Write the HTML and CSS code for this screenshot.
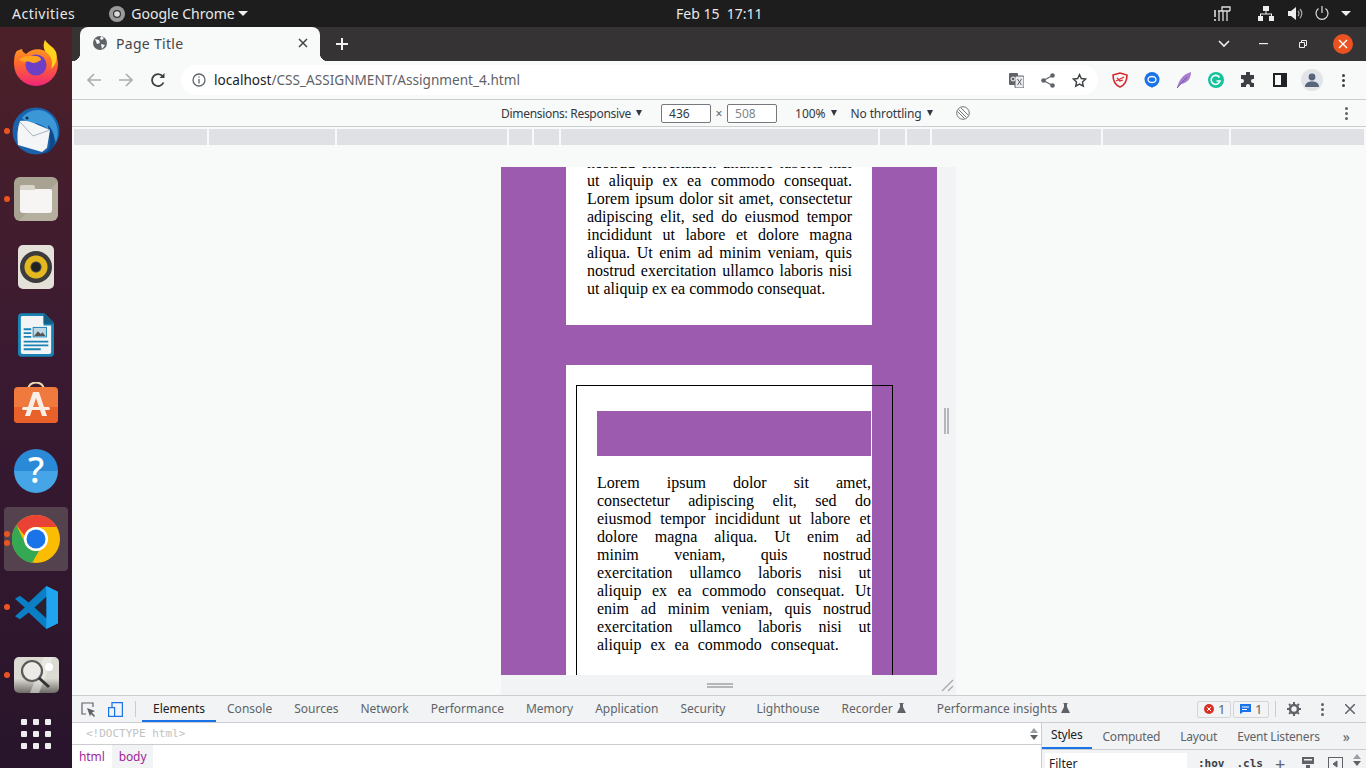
FILE: index.html
```html
<!DOCTYPE html>
<html lang="en">
<head>
    <meta charset="UTF-8">
    <title>Page Title</title>
    <link rel="stylesheet" href="styles.css">
</head>
<body>

    <header class="topbar">
        <span class="activities">Activities</span>
        <span class="app-menu">
            <svg class="app-menu-icon" width="16" height="16" viewBox="0 0 16 16"><circle cx="8" cy="8" r="8" fill="#9a9a9a"/><circle cx="8" cy="8" r="4" fill="#333"/><circle cx="8" cy="8" r="2.8" fill="#ddd"/></svg>
            Google Chrome
            <i class="caret"></i>
        </span>
        <span class="clock">Feb 15&nbsp;&nbsp;17:11</span>
        <span class="tray">
            <svg class="tray-meter" width="17" height="16" viewBox="0 0 17 16" fill="none" stroke="#ddd" stroke-width="1.300"><path d="M1 4v7M1 13v2" stroke-width="1.600"/><path d="M4 5h12M5 5v10M9 5v10M13 5v10M8 5V1h8v4"/></svg>
            <svg class="tray-net" width="16" height="15" viewBox="0 0 16 15" fill="#eee"><rect x="5" y="0" width="6" height="5"/><rect x="0" y="10" width="5" height="5"/><rect x="11" y="10" width="5" height="5"/><path d="M7.500 5h1v2.500H14V10h-1V8.500H3V10H2V7.500h5.500z"/></svg>
            <svg class="tray-vol" width="16" height="15" viewBox="0 0 16 15"><path d="M0 5h3l5-4v13l-5-4H0z" fill="#eee"/><path d="M10 5a3.500 3.500 0 0 1 0 5M12 3a6.500 6.500 0 0 1 0 9" fill="none" stroke="#aaa" stroke-width="1.200"/></svg>
            <svg class="tray-power" width="14" height="15" viewBox="0 0 14 15" fill="none" stroke="#ddd" stroke-width="1.200"><path d="M7 0v7M3.500 2.500a6 6 0 1 0 7 0"/></svg>
            <i class="caret"></i>
        </span>
    </header>

    <div class="desktop">
        <nav class="dock">
            <div class="dock-item">
                <svg width="46" height="46" viewBox="0 0 46 46"><defs><linearGradient id="fx" x1="0" y1="0" x2="0" y2="1"><stop offset="0" stop-color="#ffb01e"/><stop offset=".5" stop-color="#ff6a2a"/><stop offset="1" stop-color="#f0247a"/></linearGradient></defs><path d="M3 12C1 16 1 20 1 24a22 22 0 0 0 44 0c0-5-2-10-5-14-2-3-7-7-8-10-1 5-1 8 0 11-6-3-14-2-19 3-2-1-4-3-4-5-2 1-5 1-6 3z" fill="url(#fx)"/><path d="M32 0c-2 5-2 9 2 13 5 4 6 10 4 16 5-4 7-11 5-17-2-5-9-8-11-12z" fill="#ffd21e"/><circle cx="23" cy="25" r="10.500" fill="#6d3fc6"/><path d="M6 19c5-3 12-4 16-3 4 0 6 2 6 4-3 2-5 3-8 3-3-1-5-2-8-1-3 0-5-1-6-3z" fill="#ffa41e"/></svg>
            </div>
            <div class="dock-item has-dot">
                <svg width="48" height="48" viewBox="0 0 48 48"><circle cx="24" cy="24" r="23.500" fill="#1b62ac"/><path d="M10 11C17 1 33 0 41 11c5 7 6 16 3 24-3-9-9-15-17-18-6-2-13-1-17-6z" fill="#3b97d6"/><path d="M36 18c5 5 8 13 6 21-3 5-6 7-9 8 3-4 6-8 5-12z" fill="#0d4a8c"/><path d="M8 14c6-1 12 1 18 4l12 5-3 18-5 4L6 38c-1-8-1-16 2-24z" fill="#f4f5f7"/><path d="M8 15l13 14 17-6" fill="none" stroke="#a8b4bf" stroke-width="1"/><circle cx="15" cy="11" r="1.500" fill="#0c2f55"/></svg>
            </div>
            <div class="dock-item has-dot">
                <div class="files-tile"><div class="folder"></div></div>
            </div>
            <div class="dock-item">
                <div class="rhythm-tile"><div class="speaker"></div></div>
            </div>
            <div class="dock-item">
                <svg width="36" height="44" viewBox="0 0 38 46"><path d="M4 0h24l10 10v32a4 4 0 0 1-4 4H4a4 4 0 0 1-4-4V4a4 4 0 0 1 4-4z" fill="#1a82b5"/><path d="M4 3h23v10h8v28a2 2 0 0 1-2 2H5a2 2 0 0 1-2-2V4z" fill="#f2f4f5"/><path d="M28 0l10 10v1H27V0z" fill="#155f86"/><path d="M6 16h8v2H6zM6 20h8v2H6zM6 24h8v2H6zM6 29h26v2H6zM6 33h26v2H6zM6 37h18v2H6z" fill="#1a82b5"/><rect x="16" y="15" width="14" height="10" fill="#bfd8e6" stroke="#1a82b5"/><path d="M17 24l4-5 3 3 2-2 3 4z" fill="#555"/></svg>
            </div>
            <div class="dock-item">
                <svg width="44" height="42" viewBox="0 0 44 42"><path d="M14 8c0-10 16-10 16 0" fill="none" stroke="#efd9b0" stroke-width="2"/><rect x="0" y="5" width="44" height="36" rx="4" fill="#f0793d"/><path d="M0 25h44v12a4 4 0 0 1-4 4H4a4 4 0 0 1-4-4z" fill="#e8602a"/><path d="M19 10h6l8 24h-5l-6-18-6 18h-5z" fill="#fbeee6"/><rect x="8" y="25" width="28" height="3" rx="1.500" fill="#fbeee6"/></svg>
            </div>
            <div class="dock-item">
                <div class="help-tile">?</div>
            </div>
            <div class="dock-item is-active has-two-dots">
                <svg width="48" height="48" viewBox="0 0 48 48"><circle cx="24" cy="24" r="24" fill="#fbbc04"/><path d="M24 0a24 24 0 0 1 20.800 12H24a12 12 0 0 0-11.500 8.500L4.400 10.200A24 24 0 0 1 24 0z" fill="#ea4335"/><path d="M4.400 10.200l9.500 19.800a12 12 0 0 0 13.300 5.600L20 48A24 24 0 0 1 4.400 10.200z" fill="#34a853"/><circle cx="24" cy="24" r="12" fill="#fff"/><circle cx="24" cy="24" r="9.500" fill="#1a73e8"/></svg>
            </div>
            <div class="dock-item has-dot">
                <svg width="43" height="43" viewBox="0 0 44 44"><path d="M32 0l12 6v32l-12 6-18-17-9 7-5-3 10-9L0 13l5-3 9 7z" fill="#0b7fc6"/><path d="M32 0l12 6v32l-12 6z" fill="#20a4ee"/><path d="M32 11v22L20 22z" fill="#2a2030"/></svg>
            </div>
            <div class="dock-item has-dot">
                <div class="lens-tile">
                    <svg width="45" height="36" viewBox="0 0 45 36" fill="none"><path d="M30 0h9L25 36h-9z" fill="#f4f3ef" opacity=".5"/><circle cx="35" cy="10" r="4" fill="#fff"/><circle cx="18" cy="14" r="10" stroke="#5a5a5a" stroke-width="2.200" fill="#ecebe7"/><path d="M25 21l10 9" stroke="#333" stroke-width="3"/></svg>
                </div>
            </div>
            <div class="dock-grid">
                <i></i><i></i><i></i><i></i><i></i><i></i><i></i><i></i><i></i>
            </div>
        </nav>

        <div class="chrome">
            <div class="tabstrip">
                <div class="tab">
                    <svg width="16" height="16" viewBox="0 0 16 16"><circle cx="8" cy="8" r="7" fill="#5f6368"/><path d="M3 4l4 1 1 3-3 1zM9 1l3 2-2 2-2-1zM9 9l4 1-3 4z" fill="#f8f9f9"/></svg>
                    <span class="tab-title">Page Title</span>
                    <svg class="tab-close" width="10" height="10" viewBox="0 0 10 10" stroke="#444" stroke-width="1.500"><path d="M1 1l8 8M9 1l-8 8"/></svg>
                </div>
                <svg class="new-tab" width="12" height="12" viewBox="0 0 12 12" stroke="#f1f1f1" stroke-width="2"><path d="M6 0v12M0 6h12"/></svg>
                <svg class="tab-search" width="12" height="8" viewBox="0 0 12 8" fill="none" stroke="#eee" stroke-width="1.600"><path d="M1 1l5 5 5-5"/></svg>
                <svg class="win-min" width="9" height="2" viewBox="0 0 9 2" fill="#eee"><rect width="9" height="1.200"/></svg>
                <svg class="win-max" width="8" height="8" viewBox="0 0 8 8" fill="none" stroke="#eee"><path d="M.5 2.500h5v5h-5zM2.500 2.500V.5h5v5h-2"/></svg>
                <div class="win-close">
                    <svg width="10" height="10" viewBox="0 0 10 10" stroke="#fff" stroke-width="1.400"><path d="M1 1l8 8M9 1l-8 8"/></svg>
                </div>
            </div>

            <div class="toolbar">
                <svg class="nav-btn" width="16" height="16" viewBox="0 0 16 16" fill="none" stroke="#a9acb0" stroke-width="1.600"><path d="M15 8H2M8 2L2 8l6 6"/></svg>
                <svg class="nav-btn" width="16" height="16" viewBox="0 0 16 16" fill="none" stroke="#a9acb0" stroke-width="1.600"><path d="M1 8h13M8 2l6 6-6 6"/></svg>
                <svg class="nav-btn" width="16" height="16" viewBox="0 0 16 16" fill="none" stroke="#3c4043" stroke-width="1.800"><path d="M13.500 10.500a6 6 0 1 1-.8-6.200"/><path d="M14.500 1v5h-5z" fill="#3c4043" stroke="none"/></svg>
                <div class="omnibox">
                    <svg class="info-icon" width="14" height="14" viewBox="0 0 14 14" fill="none" stroke="#5f6368" stroke-width="1.300"><circle cx="7" cy="7" r="6"/><path d="M7 6v4.500M7 3.500v1.300"/></svg>
                    <span class="url"><b>localhost</b>/CSS_ASSIGNMENT/Assignment_4.html</span>
                    <span class="omni-actions">
                        <svg width="15" height="15" viewBox="0 0 15 15"><rect x="0" y="0" width="9" height="12" rx="1" fill="#5f6368"/><rect x="6" y="3" width="9" height="12" rx="1" fill="#e8eaed" stroke="#5f6368"/><path d="M8.500 6l4 6M12.500 6l-4 6" stroke="#5f6368"/><circle cx="4" cy="6" r="2" fill="none" stroke="#fff"/></svg>
                        <svg width="14" height="15" viewBox="0 0 14 15" fill="#5f6368"><circle cx="11.500" cy="2.500" r="2.300"/><circle cx="2.500" cy="7.500" r="2.300"/><circle cx="11.500" cy="12.500" r="2.300"/><path d="M2.500 7.500l9-5M2.500 7.500l9 5" stroke="#5f6368" stroke-width="1.200"/></svg>
                        <svg width="15" height="15" viewBox="0 0 24 24" fill="none" stroke="#3c4043" stroke-width="2.200"><path d="M12 2.500l2.900 6.300 6.900.8-5.100 4.700 1.400 6.800-6.100-3.400-6.100 3.400 1.400-6.800-5.100-4.700 6.900-.8z"/></svg>
                    </span>
                </div>
                <div class="extensions">
                    <svg width="16" height="16" viewBox="0 0 16 16" fill="none" stroke="#d9262c" stroke-width="1.600"><path d="M1 3l7-2 7 2c0 6-2 10-7 12C3 13 1 9 1 3z"/><path d="M4 9l8-4M5 6l3 3 3-1" stroke-width="1.300"/></svg>
                    <svg width="16" height="16" viewBox="0 0 16 16"><circle cx="8" cy="7.500" r="7.500" fill="#1a73e8"/><ellipse cx="8" cy="7.500" rx="4" ry="3" fill="none" stroke="#fff" stroke-width="1.300"/><path d="M6 14l2 2 2-2z" fill="#1a73e8"/></svg>
                    <svg width="16" height="16" viewBox="0 0 16 16"><path d="M1 16C3 7 8 2 15 0c0 6-3 11-10 12z" fill="#a77fce"/><path d="M1 16L11 5" stroke="#7a4fb0"/></svg>
                    <svg width="16" height="16" viewBox="0 0 16 16"><circle cx="8" cy="8" r="8" fill="#15c39a"/><path d="M11.500 5.500A4.500 4.500 0 1 0 12 9H8.500" fill="none" stroke="#fff" stroke-width="1.600"/></svg>
                    <svg width="16" height="16" viewBox="0 0 16 16" fill="#3c4043"><path d="M6 1a2 2 0 0 1 4 0v2h4v4h-1a2 2 0 0 0 0 4h1v4h-4v-1a2 2 0 0 0-4 0v1H1v-4h1a2 2 0 0 0 0-4H1V3h5z"/></svg>
                    <svg class="panel-icon" width="14" height="14" viewBox="0 0 14 14"><rect x="1" y="1" width="12" height="12" fill="none" stroke="#202124" stroke-width="2"/><rect x="8" y="1" width="5" height="12" fill="#202124"/></svg>
                    <div class="avatar">
                        <svg width="14" height="14" viewBox="0 0 14 14" fill="#56657a"><circle cx="7" cy="4" r="3.400"/><path d="M0 14c0-4 3-5.500 7-5.500s7 1.500 7 5.500z"/></svg>
                    </div>
                    <div class="kebab"><i></i><i></i><i></i></div>
                </div>
            </div>

            <div class="devicebar">
                <span class="device-label">Dimensions: Responsive</span><i class="tri"></i>
                <span class="size-box">436</span>
                <span class="size-x">×</span>
                <span class="size-box is-muted">508</span>
                <span class="device-zoom">100%</span><i class="tri"></i>
                <span class="device-throttle">No throttling</span><i class="tri"></i>
                <svg class="rotate-icon" width="14" height="14" viewBox="0 0 14 14" fill="none" stroke="#777"><circle cx="7" cy="7" r="6.300"/><path d="M2.500 3.500l8 8M4.500 1.500l8 8M1.500 5.500l7 7"/></svg>
                <div class="kebab is-small"><i></i><i></i><i></i></div>
            </div>

            <div class="ruler">
                <i class="w133"></i><i class="w126"></i><i class="w170"></i><i class="w23"></i><i class="w25"></i><i class="w317"></i><i class="w25"></i><i class="w23"></i><i class="w169"></i><i class="w126"></i><i class="w133"></i>
            </div>

            <div class="viewport">
                <div class="device">
                    <div class="page">
                        <div class="card card-top">
                            <p>nostrud exercitation ullamco laboris nisi ut aliquip ex ea commodo consequat. Lorem ipsum dolor sit amet, consectetur adipiscing elit, sed do eiusmod tempor incididunt ut labore et dolore magna aliqua. Ut enim ad minim veniam, quis nostrud exercitation ullamco laboris nisi ut aliquip ex ea commodo consequat.</p>
                        </div>
                        <div class="card card-bottom">
                            <div class="outlined">
                                <div class="banner"></div>
                                <p>Lorem ipsum dolor sit amet, consectetur adipiscing elit, sed do eiusmod tempor incididunt ut labore et dolore magna aliqua. Ut enim ad minim veniam, quis nostrud exercitation ullamco laboris nisi ut aliquip ex ea commodo consequat. Ut enim ad minim veniam, quis nostrud exercitation ullamco laboris nisi ut aliquip ex ea commodo consequat.</p>
                            </div>
                        </div>
                    </div>
                    <div class="handle-right"><i></i><i></i></div>
                    <div class="handle-bottom"><i></i><i></i></div>
                    <div class="handle-corner">
                        <svg width="14" height="14" viewBox="0 0 14 14" stroke="#aaa" stroke-width="1.400"><path d="M2 13L13 2M8 13l5-5"/></svg>
                    </div>
                </div>
            </div>

            <div class="devtools">
                <div class="dt-tabs">
                    <svg class="dt-inspect" width="15" height="15" viewBox="0 0 15 15" fill="none" stroke="#5f6368" stroke-width="1.200"><path d="M5 12H1V1h11v4"/><path d="M6 6l8 3-3 1.500L14 14l-1 1-3-3-1 2.500z" fill="#5f6368" stroke="none"/></svg>
                    <svg class="dt-device" width="15" height="15" viewBox="0 0 15 15" fill="none" stroke="#1a73e8" stroke-width="1.200"><path d="M4 5V.6h10.400v13.800H7"/><rect x=".6" y="5.600" width="6" height="8.800"/></svg>
                    <i class="dt-sep"></i>
                    <span class="dt-tab is-current">Elements</span>
                    <span class="dt-tab">Console</span>
                    <span class="dt-tab">Sources</span>
                    <span class="dt-tab">Network</span>
                    <span class="dt-tab">Performance</span>
                    <span class="dt-tab">Memory</span>
                    <span class="dt-tab">Application</span>
                    <span class="dt-tab">Security</span>
                    <span class="dt-tab is-wide">Lighthouse</span>
                    <span class="dt-tab">Recorder <svg class="flask" width="9" height="10" viewBox="0 0 9 10" fill="#5f6368"><path d="M2.500 0h4v1H6v3l3 6H0l3-6V1h-.5z"/></svg></span>
                    <span class="dt-tab is-wide">Performance insights <svg class="flask" width="9" height="10" viewBox="0 0 9 10" fill="#5f6368"><path d="M2.500 0h4v1H6v3l3 6H0l3-6V1h-.5z"/></svg></span>
                    <span class="dt-right">
                        <span class="badge badge-error"><svg width="10" height="10" viewBox="0 0 10 10"><circle cx="5" cy="5" r="5" fill="#d93025"/><path d="M3 3l4 4M7 3l-4 4" stroke="#fff"/></svg>1</span>
                        <span class="badge badge-info"><svg width="11" height="10" viewBox="0 0 11 10"><path d="M0 0h11v8H3L0 10z" fill="#1a73e8"/><path d="M2 3h7M2 5.500h5" stroke="#fff"/></svg>1</span>
                        <i class="dt-sep"></i>
                        <svg class="dt-gear" width="14" height="14" viewBox="0 0 14 14"><circle cx="7" cy="7" r="4" fill="none" stroke="#5f6368" stroke-width="2.600"/><path d="M7 0v14M0 7h14M2 2l10 10M12 2L2 12" stroke="#5f6368" stroke-width="2" stroke-dasharray="2 10"/></svg>
                        <div class="kebab is-small"><i></i><i></i><i></i></div>
                        <svg class="dt-close" width="10" height="10" viewBox="0 0 10 10" stroke="#5f6368" stroke-width="1.500"><path d="M0 0l10 10M10 0L0 10"/></svg>
                    </span>
                </div>
                <div class="dt-panels">
                    <div class="dt-dom">
                        <div class="dom-tree">
                            <code>&lt;!DOCTYPE html&gt;</code>
                            <span class="scroll-arrows"><i class="up"></i><i class="down"></i></span>
                        </div>
                        <div class="crumbs"><span>html</span><span class="is-on">body</span></div>
                    </div>
                    <div class="dt-styles">
                        <div class="styles-tabs">
                            <span class="is-current">Styles</span>
                            <span>Computed</span>
                            <span>Layout</span>
                            <span>Event Listeners</span>
                            <span class="more">»</span>
                        </div>
                        <div class="filter-row">
                            <span class="filter">Filter</span>
                            <code>:hov</code>
                            <code>.cls</code>
                            <span class="plus">+</span>
                            <svg class="rendering-icon" width="14" height="14" viewBox="0 0 14 14" fill="#5f6368"><rect x="1" y="0" width="12" height="7"/><rect x="3" y="2" width="8" height="1.500" fill="#f1f3f4"/><rect x="5" y="8" width="4" height="6"/></svg>
                            <svg class="sidebar-icon" width="15" height="14" viewBox="0 0 15 14" fill="none" stroke="#5f6368"><rect x=".5" y=".5" width="14" height="13"/><path d="M9 4v6L5 7z" fill="#5f6368"/></svg>
                            <span class="scroll-arrows"><i class="up"></i><i class="down"></i></span>
                        </div>
                    </div>
                </div>
            </div>
        </div>
    </div>

</body>
</html>
```

FILE: styles.css
```css
:root {
    --ui-font: "Noto Sans", "Open Sans", sans-serif;
    --purple: #9d5bb0;
    --panel: #f1f3f4;
    --chrome-bg: #f8f9f9;
    --line: #cbcdd1;
    --tab-text: #5f6368;
}

* {
    box-sizing: border-box;
    margin: 0;
    padding: 0;
}

html, body {
    height: 768px;
    overflow: hidden;
}

body {
    font-family: var(--ui-font);
    background-color: #fff;
}

i {
    display: block;
}

svg {
    flex: none;
    display: block;
}

/* GNOME top bar */
.topbar {
    height: 27px;
    background-color: #1d1d1d;
    color: #e8e8e8;
    font-size: 14px;
    display: flex;
    align-items: center;
    padding-left: 12px;
    position: relative;
}

.activities {
    letter-spacing: .5px;
}

.app-menu {
    display: flex;
    align-items: center;
    margin-left: 34px;
}

.app-menu-icon {
    margin-right: 6px;
}

.caret {
    width: 0;
    height: 0;
    border-left: 5px solid transparent;
    border-right: 5px solid transparent;
    border-top: 5px solid #eee;
    margin-left: 3px;
}

.clock {
    position: absolute;
    left: 676px;
}

.tray {
    margin-left: auto;
    display: flex;
    align-items: center;
    padding-right: 15px;
}

.tray-net {
    margin-left: 27px;
}

.tray-vol {
    margin-left: 14px;
}

.tray-power {
    margin-left: 11px;
}

.tray .caret {
    margin-left: 12px;
}

.desktop {
    display: flex;
    height: 741px;
}

/* Ubuntu dock */
.dock {
    width: 72px;
    flex: none;
    padding-top: 2px;
    background: linear-gradient(#4c2028, #3a1a31 45%, #28152b);
    display: flex;
    flex-direction: column;
    align-items: center;
}

.dock-item {
    width: 64px;
    height: 68px;
    display: flex;
    align-items: center;
    justify-content: center;
    position: relative;
}

.has-dot::before,
.has-two-dots::before,
.has-two-dots::after {
    content: "";
    position: absolute;
    left: 0;
    top: 31px;
    width: 6px;
    height: 6px;
    border-radius: 50%;
    background-color: #e95420;
}

.has-two-dots::before {
    top: 24px;
}

.has-two-dots::after {
    top: 33px;
}

.is-active {
    height: 64px;
    margin: 2px 0;
    background-color: #54434f;
    border-radius: 4px;
}

.files-tile {
    width: 44px;
    height: 44px;
    border-radius: 6px;
    background: linear-gradient(135deg, #a8a292 55%, #b5af9f 55%);
    display: flex;
    align-items: center;
    justify-content: center;
}

.folder {
    width: 32px;
    height: 24px;
    margin-top: 4px;
    background-color: #f6f5f3;
    border-radius: 0 2px 3px 3px;
    position: relative;
}

.folder::before {
    content: "";
    position: absolute;
    left: 0;
    top: -4px;
    width: 15px;
    height: 5px;
    background-color: #d8d5cd;
    border-radius: 2px 2px 0 0;
}

.rhythm-tile {
    width: 36px;
    height: 44px;
    border-radius: 5px;
    background-color: #e4e1d8;
    display: flex;
    align-items: center;
    justify-content: center;
}

.speaker {
    width: 32px;
    height: 32px;
    border-radius: 50%;
    background: radial-gradient(#222 0 4px, #444 5px, #e6b81f 6px, #e6b81f 11px, #3c3c3c 12px);
}

.help-tile {
    width: 44px;
    height: 44px;
    border-radius: 50%;
    background: linear-gradient(#2a8ad8 50%, #46a5e6 50%);
    color: #fff;
    font-size: 36px;
    font-weight: 500;
    line-height: 42px;
    text-align: center;
}

.lens-tile {
    width: 45px;
    height: 36px;
    border-radius: 5px;
    background: linear-gradient(#dcdbd3 60%, #6e6a66);
    overflow: hidden;
}

.dock-grid {
    margin-top: 10px;
    width: 30px;
    display: grid;
    grid-template-columns: repeat(3, 6px);
    gap: 6px;
}

.dock-grid i {
    height: 6px;
    border-radius: 1px;
    background-color: #eeeeee;
}

/* browser window */
.chrome {
    flex: 1;
    min-width: 0;
    display: flex;
    flex-direction: column;
}

.tabstrip {
    height: 34px;
    flex: none;
    background-color: #353334;
    display: flex;
    align-items: center;
    padding-left: 8px;
}

.tab {
    width: 240px;
    height: 34px;
    background-color: var(--chrome-bg);
    border-radius: 8px 8px 0 0;
    display: flex;
    align-items: center;
    padding: 0 12px 2px;
    color: #45474a;
    font-size: 14px;
    position: relative;
}

.tab::before,
.tab::after {
    content: "";
    position: absolute;
    bottom: 0;
    width: 8px;
    height: 8px;
}

.tab::before {
    left: -8px;
    background: radial-gradient(circle at 0 0, transparent 8px, var(--chrome-bg) 8.500px);
}

.tab::after {
    right: -8px;
    background: radial-gradient(circle at 100% 0, transparent 8px, var(--chrome-bg) 8.500px);
}

.tab-title {
    margin-left: 8px;
    letter-spacing: .3px;
}

.tab-close {
    margin-left: auto;
}

.new-tab {
    margin-left: 16px;
}

.tab-search {
    margin-left: 870px;
}

.win-min {
    margin-left: 29px;
}

.win-max {
    margin-left: 31px;
}

.win-close {
    width: 20px;
    height: 20px;
    margin-left: 26px;
    border-radius: 50%;
    background-color: #ea5321;
    display: flex;
    align-items: center;
    justify-content: center;
}

.toolbar {
    height: 39px;
    flex: none;
    background-color: var(--chrome-bg);
    border-bottom: 1px solid var(--line);
    display: flex;
    align-items: center;
    padding-left: 14px;
}

.nav-btn {
    margin-right: 16px;
}

.omnibox {
    width: 917px;
    height: 30px;
    margin-left: -1px;
    border-radius: 15px;
    background-color: #fff;
    display: flex;
    align-items: center;
    padding: 0 11px;
    font-size: 13.600px;
    color: #5f6368;
}

.info-icon {
    margin-right: 8px;
}

.url {
    padding-bottom: 2px;
}

.url b {
    font-weight: 400;
    color: #202124;
}

.omni-actions {
    margin-left: auto;
    display: flex;
    align-items: center;
    gap: 17px;
}

.extensions {
    display: flex;
    align-items: center;
    gap: 16px;
    margin-left: 14px;
}

.panel-icon {
    margin: 0 1px;
}

.avatar {
    width: 22px;
    height: 22px;
    margin: 0 -3px;
    border-radius: 50%;
    background-color: #e1e4e8;
    display: flex;
    align-items: center;
    justify-content: center;
}

.kebab {
    display: flex;
    flex-direction: column;
    gap: 2px;
    margin-left: 6px;
}

.kebab i {
    width: 3px;
    height: 3px;
    border-radius: 50%;
    background-color: #3c4043;
}

.kebab.is-small i {
    background-color: #5f6368;
}

/* responsive mode bar */
.devicebar {
    height: 27px;
    flex: none;
    background-color: var(--chrome-bg);
    border-bottom: 1px solid var(--line);
    display: flex;
    align-items: center;
    padding-left: 429px;
    font-size: 12px;
    color: #303942;
}

.device-label {
    letter-spacing: -.3px;
}

.tri {
    width: 0;
    height: 0;
    border-left: 3.500px solid transparent;
    border-right: 3.500px solid transparent;
    border-top: 6px solid #303942;
    margin-left: 5px;
}

.size-box {
    width: 50px;
    height: 19px;
    margin-left: 19px;
    padding-left: 7px;
    border: 1px solid #76787b;
    border-radius: 2px;
    background-color: #fff;
    line-height: 17px;
}

.size-box.is-muted {
    margin-left: 0;
    color: #80868b;
}

.size-x {
    width: 16px;
    text-align: center;
    color: #5f6368;
}

.device-zoom {
    margin-left: 18px;
}

.device-throttle {
    margin-left: 14px;
    letter-spacing: -.15px;
}

.rotate-icon {
    margin-left: 23px;
}

.devicebar .kebab {
    margin-left: auto;
    margin-right: 18px;
}

.ruler {
    height: 18px;
    flex: none;
    background-color: var(--chrome-bg);
    padding: 2px 2px 0;
    display: flex;
    gap: 2px;
}

.ruler i {
    height: 16px;
    background-color: #dfe1e5;
}

.w23 { width: 23px; }
.w25 { width: 25px; }
.w126 { width: 126px; }
.w133 { width: 133px; }
.w169 { width: 169px; }
.w170 { width: 170px; }
.w317 { width: 317px; }

/* emulated device */
.viewport {
    height: 550px;
    flex: none;
    padding: 22px 0 0 429px;
    background-color: var(--chrome-bg);
}

.device {
    display: grid;
    grid-template-columns: 436px 19px;
    grid-template-rows: 508px 20px;
}

.page {
    overflow: hidden;
    background-color: var(--purple);
    padding: 0 65px;
    font-family: "Liberation Serif", serif;
    font-size: 16px;
    line-height: 18px;
    text-align: justify;
    color: #000;
}

.card {
    background-color: #fff;
    width: 306px;
}

.card-top {
    height: 158px;
    padding: 0 20px 0 21px;
    overflow: hidden;
}

.card-top p {
    margin-top: -13px;
}

.card-bottom {
    margin-top: 40px;
    height: 400px;
    padding: 20px 0 0 10px;
}

.outlined {
    width: 317px;
    height: 380px;
    border: 1px solid #000;
    padding: 25px 21px 0 20px;
}

.banner {
    height: 45px;
    margin-bottom: 18px;
    background-color: var(--purple);
}

.outlined p {
    word-spacing: 5px;
}

.handle-right,
.handle-bottom,
.handle-corner {
    background-color: var(--panel);
}

.handle-right {
    display: flex;
    align-items: center;
    justify-content: center;
    gap: 1px;
    padding-bottom: 1px;
}

.handle-right i {
    width: 2px;
    height: 26px;
    background-color: #b4b6b9;
}

.handle-bottom {
    display: flex;
    flex-direction: column;
    align-items: center;
    justify-content: center;
    gap: 1px;
    padding-left: 2px;
}

.handle-bottom i {
    width: 26px;
    height: 2px;
    background-color: #b4b6b9;
}

.handle-corner {
    display: flex;
    align-items: center;
    justify-content: center;
}

/* devtools */
.devtools {
    flex: 1;
    min-height: 0;
    border-top: 1px solid var(--line);
    background-color: #fff;
    font-size: 12px;
    overflow: hidden;
}

.dt-tabs {
    height: 27px;
    background-color: var(--panel);
    border-bottom: 1px solid var(--line);
    display: flex;
    align-items: stretch;
    color: var(--tab-text);
}

.dt-tabs > svg {
    align-self: center;
}

.dt-inspect {
    margin-left: 9px;
}

.dt-device {
    margin-left: 12px;
}

.dt-sep {
    width: 1px;
    height: 16px;
    align-self: center;
    background-color: #ccc;
}

.dt-tabs > .dt-sep {
    margin: 0 6px 0 12px;
}

.dt-tab {
    padding: 0 11px 2px;
    line-height: 25px;
    display: flex;
    align-items: center;
    gap: 4px;
    white-space: nowrap;
}

.dt-tab.is-current {
    color: #202124;
    border-bottom: 2px solid #1a73e8;
    padding-bottom: 0;
}

.dt-tab.is-wide {
    margin-left: 9px;
}

.dt-right {
    margin-left: auto;
    display: flex;
    align-items: center;
    padding-right: 11px;
}

.badge {
    height: 17px;
    margin-right: 2px;
    padding-left: 6px;
    border: 1px solid #d2d4d7;
    border-radius: 2px;
    display: flex;
    align-items: center;
    gap: 4px;
    font-size: 13px;
}

.badge-error {
    width: 34px;
}

.badge-info {
    width: 36px;
}

.dt-right .dt-sep {
    margin: 0 11px 0 4px;
}

.dt-right .kebab {
    margin-left: 20px;
    margin-right: 21px;
}

.dt-panels {
    display: flex;
}

.dt-dom {
    width: 970px;
    flex: none;
    border-right: 1px solid var(--line);
    height: 50px;
}

.dom-tree {
    height: 22px;
    border-bottom: 1px solid var(--line);
    display: flex;
    align-items: center;
    padding-left: 14px;
    padding-right: 3px;
    justify-content: space-between;
}

code {
    font-family: "DejaVu Sans Mono", monospace;
    font-size: 11px;
    color: #c0c2c4;
}

.scroll-arrows i {
    width: 0;
    height: 0;
    border-left: 4px solid transparent;
    border-right: 4px solid transparent;
}

.scroll-arrows .up {
    border-bottom: 5px solid #9aa0a6;
    margin-bottom: 2px;
}

.scroll-arrows .down {
    border-top: 5px solid #5f6368;
}

.crumbs {
    display: flex;
    height: 23px;
    line-height: 23px;
    color: #a11f9c;
    letter-spacing: -.1px;
}

.crumbs span {
    padding: 0 7px;
}

.crumbs .is-on {
    background-color: var(--panel);
}

.dt-styles {
    flex: 1;
    min-width: 0;
}

.styles-tabs {
    height: 27px;
    background-color: var(--panel);
    border-bottom: 1px solid var(--line);
    display: flex;
    align-items: center;
    color: var(--tab-text);
    letter-spacing: -.2px;
}

.styles-tabs span {
    padding: 0 10px;
    line-height: 23px;
}

.styles-tabs .is-current {
    color: #202124;
    border-bottom: 2px solid #1a73e8;
    height: 26px;
    padding-left: 9px;
}

.styles-tabs .more {
    margin-left: 3px;
    font-size: 14px;
}

.filter-row {
    display: flex;
    align-items: center;
    height: 24px;
    padding: 3px 0 0 3px;
    background-color: var(--panel);
    color: #5f6368;
}

.filter {
    width: 142px;
    height: 22px;
    line-height: 22px;
    padding-left: 4px;
    background-color: #fff;
    color: #202124;
}

.filter-row code {
    color: #3c4043;
    font-weight: 700;
    margin-left: 11px;
}

.filter-row code + code {
    margin-left: 12px;
}

.plus {
    font-size: 18px;
    margin-left: 12px;
}

.rendering-icon {
    margin-left: 16px;
}

.sidebar-icon {
    margin-left: 13px;
}

.filter-row .scroll-arrows {
    margin: -8px 0 0 10px;
}
```
